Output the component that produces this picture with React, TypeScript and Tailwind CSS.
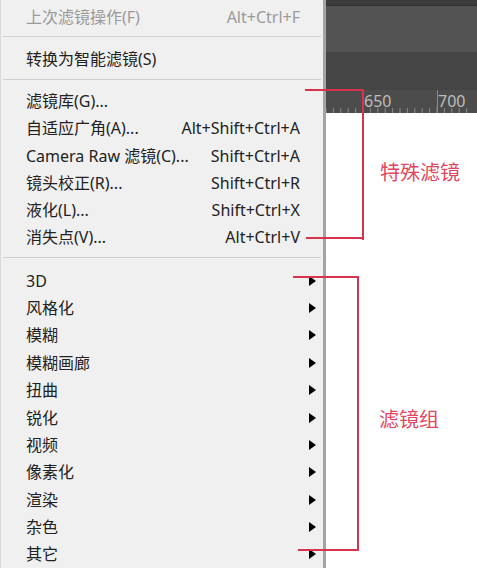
const topRows = [
  { label: "滤镜库(G)...", key: "" },
  { label: "自适应广角(A)...", key: "Alt+Shift+Ctrl+A" },
  { label: "Camera Raw 滤镜(C)...", key: "Shift+Ctrl+A" },
  { label: "镜头校正(R)...", key: "Shift+Ctrl+R" },
  { label: "液化(L)...", key: "Shift+Ctrl+X" },
  { label: "消失点(V)...", key: "Alt+Ctrl+V" },
]

const subMenus = ["3D", "风格化", "模糊", "模糊画廊", "扭曲", "锐化", "视频", "像素化", "渲染", "杂色", "其它"]

function Row({ label, shortcut, disabled }: { label: string; shortcut?: string; disabled?: boolean }) {
  return (
    <div className={`flex h-[27.3px] items-center justify-between pl-[25px] pr-[23px] ${disabled ? "text-[#9a9a9a]" : "text-[#222]"}`}>
      <span>{label}</span>
      {shortcut && <span>{shortcut}</span>}
    </div>
  )
}

function SubRow({ label }: { label: string }) {
  return (
    <div className="flex h-[27.4px] items-center justify-between pl-[25px] pr-[7px] text-[#222]">
      <span>{label}</span>
      <svg width="7" height="10" viewBox="0 0 7 10">
        <path d="M0 0 L7 5 L0 10 Z" fill="#000" />
      </svg>
    </div>
  )
}

function Separator({ h = 15 }: { h?: number }) {
  return (
    <div className={h === 16 ? "h-[16px] pt-[6px]" : "h-[15px] pt-[6px]"}>
      <div className="mx-[2px] h-px bg-[#cfcfcf]" />
    </div>
  )
}

function Ruler() {
  const ticks = []
  for (let i = 0; i < 20; i++) {
    const x = 0 + i * 7.4
    ticks.push(<line key={i} x1={x} x2={x} y1={i % 10 === 5 ? 16 : 18} y2={23} stroke="#8a8a8a" strokeWidth="1" />)
  }
  return (
    <div className="relative h-[23px] bg-[#4c4c4c]">
      <svg className="absolute left-0 top-0" width="151" height="23">
        {ticks}
        <line x1="37.5" x2="37.5" y1="0" y2="23" stroke="#8a8a8a" />
        <line x1="111.5" x2="111.5" y1="0" y2="23" stroke="#8a8a8a" />
      </svg>
      <span className="absolute left-[38px] top-[1px] text-[16px] leading-[20px] text-[#bdbdbd]">650</span>
      <span className="absolute left-[112px] top-[1px] text-[16px] leading-[20px] text-[#bdbdbd]">700</span>
    </div>
  )
}

export default function App() {
  return (
    <div className="relative flex h-[568px] w-[477px] overflow-hidden bg-white font-['Noto_Sans','Noto_Sans_CJK_SC',sans-serif] text-[16px]">
      {/* menu */}
      <div className="flex w-[326px] shrink-0 flex-col border-l border-r-[3px] border-l-[#dadada] border-r-[#a3a3a3] bg-[#f0f0f0] pt-[3px]">
        <Row label="上次滤镜操作(F)" shortcut="Alt+Ctrl+F" disabled />
        <Separator />
        <Row label="转换为智能滤镜(S)" />
        <Separator />
        {topRows.map((r) => (
          <Row key={r.label} label={r.label} shortcut={r.key} />
        ))}
        <Separator h={16} />
        {subMenus.map((s) => (
          <SubRow key={s} label={s} />
        ))}
      </div>

      {/* canvas side */}
      <div className="flex flex-1 flex-col">
        <div className="h-[6px] border-b border-[#2f2f2f] bg-[#3c3c3c]" />
        <div className="h-[46px] bg-[#535353]" />
        <div className="h-[38px] bg-[#454545]" />
        <Ruler />
        <div className="flex-1 bg-white" />
      </div>

      {/* annotations */}
      <div className="absolute left-[305px] top-[89px] h-[2px] w-[59px] bg-[#d7334c]" />
      <div className="absolute left-[362px] top-[89px] h-[151px] w-[2px] bg-[#d7334c]" />
      <div className="absolute left-[306px] top-[237px] h-[2px] w-[58px] bg-[#d7334c]" />
      <span className="absolute left-[380px] top-[159px] text-[20px] leading-[28px] text-[#e0475f]">特殊滤镜</span>

      <div className="absolute left-[293px] top-[276px] h-[2px] w-[66px] bg-[#d7334c]" />
      <div className="absolute left-[357px] top-[276px] h-[275px] w-[2px] bg-[#d7334c]" />
      <div className="absolute left-[298px] top-[549px] h-[2px] w-[61px] bg-[#d7334c]" />
      <span className="absolute left-[379px] top-[406px] text-[20px] leading-[28px] text-[#e0475f]">滤镜组</span>
    </div>
  )
}
